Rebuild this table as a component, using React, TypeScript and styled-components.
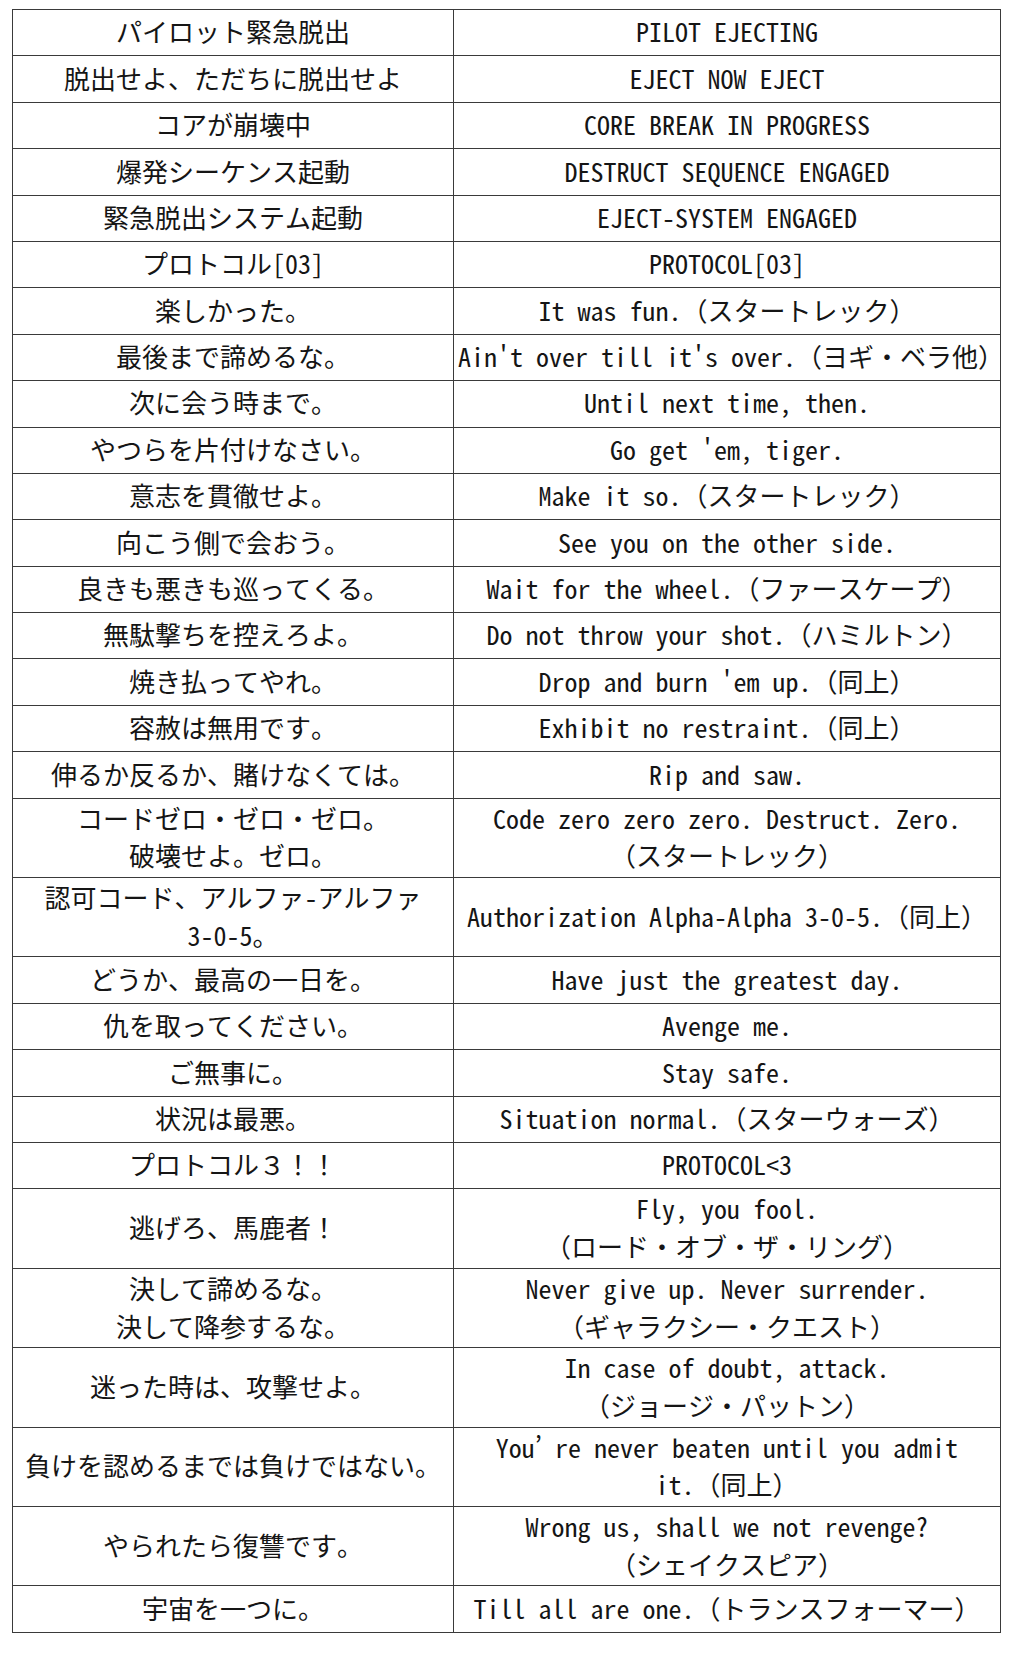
import React from "react";
import styled, { createGlobalStyle } from "styled-components";

const GlobalStyle = createGlobalStyle`
  html, body {
    margin: 0;
    padding: 0;
    background: #ffffff;
  }
  body {
    font-family: "Noto Sans Mono CJK JP", "Noto Sans CJK JP", sans-serif;
    color: #151515;
  }
`;

const Page = styled.main`
  padding: 9px 0 0 12px;
`;

const Table = styled.table`
  border-collapse: collapse;
  table-layout: fixed;
  width: 988px;
`;

const JaCol = styled.col`
  width: 441px;
`;

const EnCol = styled.col`
  width: 547px;
`;

const Row = styled.tr`
  height: 46.4px;
`;

const Cell = styled.td`
  border: 1px solid #3a3a3a;
  padding: 0 4px 3px;
  text-align: center;
  vertical-align: middle;
  font-size: 26px;
  line-height: 37.7px;
  font-weight: 400;
  white-space: nowrap;
`;

type Entry = { ja: string[]; en: string[] };

const rows: Entry[] = [
  { ja: ["パイロット緊急脱出"], en: ["PILOT EJECTING"] },
  { ja: ["脱出せよ、ただちに脱出せよ"], en: ["EJECT NOW EJECT"] },
  { ja: ["コアが崩壊中"], en: ["CORE BREAK IN PROGRESS"] },
  { ja: ["爆発シーケンス起動"], en: ["DESTRUCT SEQUENCE ENGAGED"] },
  { ja: ["緊急脱出システム起動"], en: ["EJECT-SYSTEM ENGAGED"] },
  { ja: ["プロトコル[03]"], en: ["PROTOCOL[03]"] },
  { ja: ["楽しかった。"], en: ["It was fun.（スタートレック）"] },
  { ja: ["最後まで諦めるな。"], en: ["Ain't over till it's over.（ヨギ・ベラ他）"] },
  { ja: ["次に会う時まで。"], en: ["Until next time, then."] },
  { ja: ["やつらを片付けなさい。"], en: ["Go get 'em, tiger."] },
  { ja: ["意志を貫徹せよ。"], en: ["Make it so.（スタートレック）"] },
  { ja: ["向こう側で会おう。"], en: ["See you on the other side."] },
  { ja: ["良きも悪きも巡ってくる。"], en: ["Wait for the wheel.（ファースケープ）"] },
  { ja: ["無駄撃ちを控えろよ。"], en: ["Do not throw your shot.（ハミルトン）"] },
  { ja: ["焼き払ってやれ。"], en: ["Drop and burn 'em up.（同上）"] },
  { ja: ["容赦は無用です。"], en: ["Exhibit no restraint.（同上）"] },
  { ja: ["伸るか反るか、賭けなくては。"], en: ["Rip and saw."] },
  {
    ja: ["コードゼロ・ゼロ・ゼロ。", "破壊せよ。ゼロ。"],
    en: ["Code zero zero zero. Destruct. Zero.", "（スタートレック）"],
  },
  {
    ja: ["認可コード、アルファ-アルファ", "3-0-5。"],
    en: ["Authorization Alpha-Alpha 3-0-5.（同上）"],
  },
  { ja: ["どうか、最高の一日を。"], en: ["Have just the greatest day."] },
  { ja: ["仇を取ってください。"], en: ["Avenge me."] },
  { ja: ["ご無事に。"], en: ["Stay safe."] },
  { ja: ["状況は最悪。"], en: ["Situation normal.（スターウォーズ）"] },
  { ja: ["プロトコル３！！"], en: ["PROTOCOL<3"] },
  { ja: ["逃げろ、馬鹿者！"], en: ["Fly, you fool.", "（ロード・オブ・ザ・リング）"] },
  {
    ja: ["決して諦めるな。", "決して降参するな。"],
    en: ["Never give up. Never surrender.", "（ギャラクシー・クエスト）"],
  },
  { ja: ["迷った時は、攻撃せよ。"], en: ["In case of doubt, attack.", "（ジョージ・パットン）"] },
  {
    ja: ["負けを認めるまでは負けではない。"],
    en: ["You’ re never beaten until you admit", "it.（同上）"],
  },
  { ja: ["やられたら復讐です。"], en: ["Wrong us, shall we not revenge?", "（シェイクスピア）"] },
  { ja: ["宇宙を一つに。"], en: ["Till all are one.（トランスフォーマー）"] },
];

const Lines: React.FC<{ lines: string[] }> = ({ lines }) => (
  <>
    {lines.map((line, i) => (
      <React.Fragment key={i}>
        {i > 0 && <br />}
        {line}
      </React.Fragment>
    ))}
  </>
);

export default function App() {
  return (
    <>
      <GlobalStyle />
      <Page>
        <Table>
          <colgroup>
            <JaCol />
            <EnCol />
          </colgroup>
          <tbody>
            {rows.map((r, i) => (
              <Row key={i}>
                <Cell lang="ja">
                  <Lines lines={r.ja} />
                </Cell>
                <Cell lang="ja">
                  <Lines lines={r.en} />
                </Cell>
              </Row>
            ))}
          </tbody>
        </Table>
      </Page>
    </>
  );
}
